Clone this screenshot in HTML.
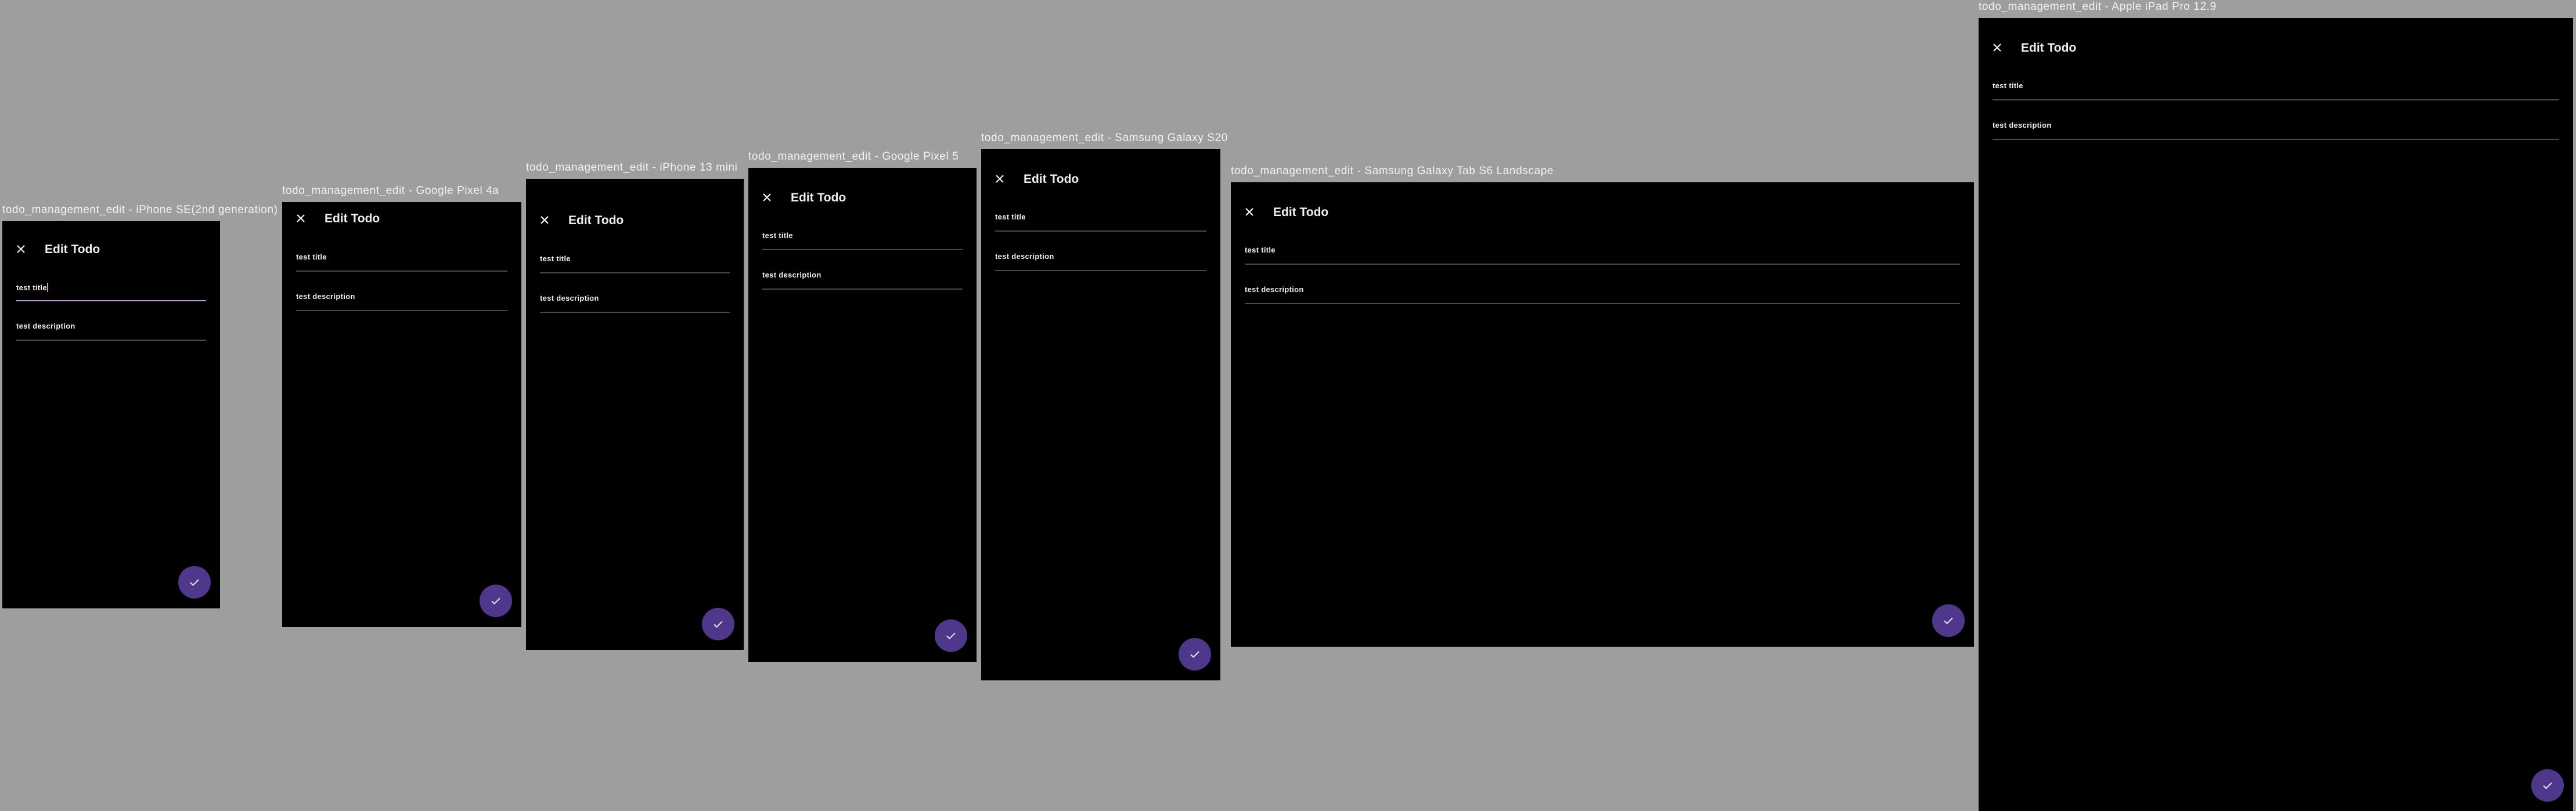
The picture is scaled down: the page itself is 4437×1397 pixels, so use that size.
<!DOCTYPE html>
<html><head><meta charset="utf-8">
<style>
*{margin:0;padding:0;box-sizing:border-box}
html,body{width:4437px;height:1397px;overflow:hidden;background:#9e9e9e;font-family:"Liberation Sans",sans-serif;position:relative}
.lbl{position:absolute;color:#f2f2f2;font-size:19px;white-space:nowrap;line-height:1;letter-spacing:0.6px}
.f{position:absolute;background:#000;overflow:hidden}
.c{position:absolute;left:0;right:0;top:0;height:300px}
.x{position:absolute;left:20px;top:36px;width:24px;height:24px}
.t{position:absolute;left:73px;top:38px;color:#eee;font-size:21px;font-weight:bold;line-height:1}
.d .x{top:39px}.d .t{top:41px}
.fl{position:absolute;left:24px;right:24px;height:2px;background:#4a4a4a}
.fl.on{background:#c291e0}
.ft{position:absolute;left:24px;color:#eee;font-size:13px;font-weight:bold;line-height:1;letter-spacing:0.3px}
.fab{position:absolute;right:16px;bottom:17px;width:56px;height:56px;border-radius:50%;background:#4f378b}
.fab svg{position:absolute;left:16px;top:16px}
.cur{display:inline-block;width:2px;height:16px;background:#c291e0;vertical-align:-3px}
</style></head><body>

<div class="lbl" style="left:4px;top:352px">todo_management_edit - iPhone SE(2nd generation)</div>
<div class="f" style="left:4px;top:381px;width:375px;height:667px"><div class="c">
<svg class="x" viewBox="0 0 24 24"><path d="M6 6L18 18M18 6L6 18" stroke="#eee" stroke-width="2.2"/></svg>
<div class="t">Edit Todo</div>
<div class="ft" style="top:106px">test title<span class="cur"></span></div><div class="fl on" style="top:136px"></div>
<div class="ft" style="top:174px">test description</div><div class="fl" style="top:204px"></div></div>
<div class="fab"><svg width="24" height="24" viewBox="0 0 24 24"><path d="M5 12.5l4.5 4.5L19 7.5" fill="none" stroke="#eaddff" stroke-width="2"/></svg></div>
</div>

<div class="lbl" style="left:486px;top:319px">todo_management_edit - Google Pixel 4a</div>
<div class="f" style="left:486px;top:348px;width:412px;height:732px"><div class="c" style="top:-20px">
<svg class="x" viewBox="0 0 24 24"><path d="M6 6L18 18M18 6L6 18" stroke="#eee" stroke-width="2.2"/></svg>
<div class="t">Edit Todo</div>
<div class="ft" style="top:108px">test title</div><div class="fl" style="top:138px"></div>
<div class="ft" style="top:176px">test description</div><div class="fl" style="top:206px"></div></div>
<div class="fab"><svg width="24" height="24" viewBox="0 0 24 24"><path d="M5 12.5l4.5 4.5L19 7.5" fill="none" stroke="#eaddff" stroke-width="2"/></svg></div>
</div>

<div class="lbl" style="left:906px;top:279px">todo_management_edit - iPhone 13 mini</div>
<div class="f" style="left:906px;top:308px;width:375px;height:812px"><div class="c" style="top:23px">
<svg class="x" viewBox="0 0 24 24"><path d="M6 6L18 18M18 6L6 18" stroke="#eee" stroke-width="2.2"/></svg>
<div class="t">Edit Todo</div>
<div class="ft" style="top:108px">test title</div><div class="fl" style="top:138px"></div>
<div class="ft" style="top:176px">test description</div><div class="fl" style="top:206px"></div></div>
<div class="fab"><svg width="24" height="24" viewBox="0 0 24 24"><path d="M5 12.5l4.5 4.5L19 7.5" fill="none" stroke="#eaddff" stroke-width="2"/></svg></div>
</div>

<div class="lbl" style="left:1289px;top:260px">todo_management_edit - Google Pixel 5</div>
<div class="f" style="left:1289px;top:289px;width:393px;height:851px"><div class="c d">
<svg class="x" viewBox="0 0 24 24"><path d="M6 6L18 18M18 6L6 18" stroke="#eee" stroke-width="2.2"/></svg>
<div class="t">Edit Todo</div>
<div class="ft" style="top:110px">test title</div><div class="fl" style="top:140px"></div>
<div class="ft" style="top:178px">test description</div><div class="fl" style="top:208px"></div></div>
<div class="fab"><svg width="24" height="24" viewBox="0 0 24 24"><path d="M5 12.5l4.5 4.5L19 7.5" fill="none" stroke="#eaddff" stroke-width="2"/></svg></div>
</div>

<div class="lbl" style="left:1690px;top:228px">todo_management_edit - Samsung Galaxy S20</div>
<div class="f" style="left:1690px;top:257px;width:412px;height:915px"><div class="c d">
<svg class="x" viewBox="0 0 24 24"><path d="M6 6L18 18M18 6L6 18" stroke="#eee" stroke-width="2.2"/></svg>
<div class="t">Edit Todo</div>
<div class="ft" style="top:110px">test title</div><div class="fl" style="top:140px"></div>
<div class="ft" style="top:178px">test description</div><div class="fl" style="top:208px"></div></div>
<div class="fab"><svg width="24" height="24" viewBox="0 0 24 24"><path d="M5 12.5l4.5 4.5L19 7.5" fill="none" stroke="#eaddff" stroke-width="2"/></svg></div>
</div>

<div class="lbl" style="left:2120px;top:285px">todo_management_edit - Samsung Galaxy Tab S6 Landscape</div>
<div class="f" style="left:2120px;top:314px;width:1280px;height:800px"><div class="c d">
<svg class="x" viewBox="0 0 24 24"><path d="M6 6L18 18M18 6L6 18" stroke="#eee" stroke-width="2.2"/></svg>
<div class="t">Edit Todo</div>
<div class="ft" style="top:110px">test title</div><div class="fl" style="top:140px"></div>
<div class="ft" style="top:178px">test description</div><div class="fl" style="top:208px"></div></div>
<div class="fab"><svg width="24" height="24" viewBox="0 0 24 24"><path d="M5 12.5l4.5 4.5L19 7.5" fill="none" stroke="#eaddff" stroke-width="2"/></svg></div>
</div>

<div class="lbl" style="left:3408px;top:2px">todo_management_edit - Apple iPad Pro 12.9</div>
<div class="f" style="left:3408px;top:31px;width:1024px;height:1366px"><div class="c d">
<svg class="x" viewBox="0 0 24 24"><path d="M6 6L18 18M18 6L6 18" stroke="#eee" stroke-width="2.2"/></svg>
<div class="t">Edit Todo</div>
<div class="ft" style="top:110px">test title</div><div class="fl" style="top:140px"></div>
<div class="ft" style="top:178px">test description</div><div class="fl" style="top:208px"></div></div>
<div class="fab" style="bottom:16px"><svg width="24" height="24" viewBox="0 0 24 24"><path d="M5 12.5l4.5 4.5L19 7.5" fill="none" stroke="#eaddff" stroke-width="2"/></svg></div>
</div>

</body></html>
